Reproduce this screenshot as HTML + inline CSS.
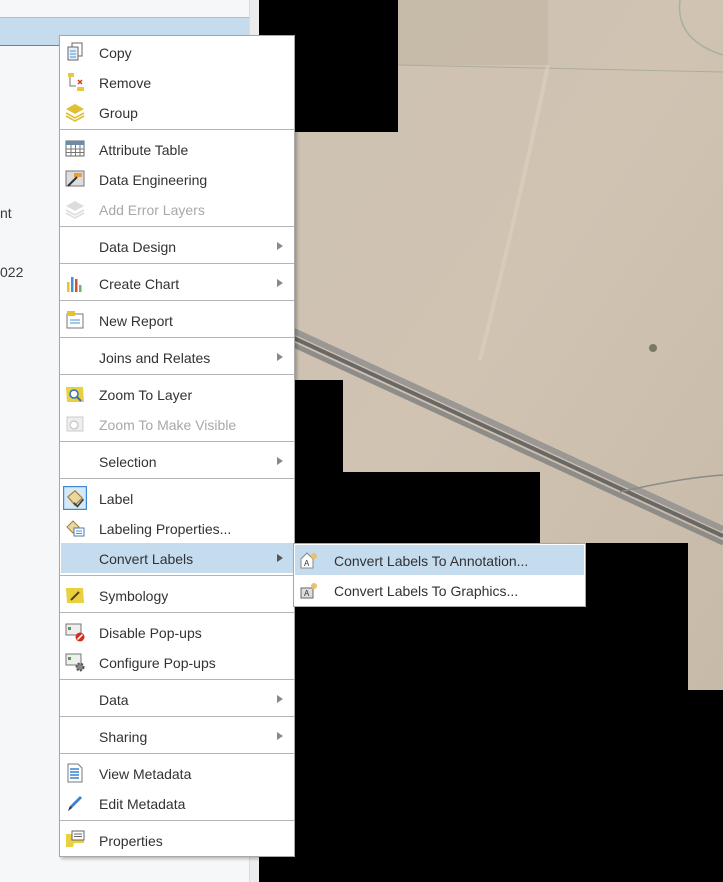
<!DOCTYPE html>
<html><head><meta charset="utf-8"><style>
*{margin:0;padding:0;box-sizing:border-box}
body{width:723px;height:882px;overflow:hidden;background:#000;position:relative;font-family:"Liberation Sans",sans-serif;font-size:14px;color:#323232}
#left{position:absolute;left:0;top:0;width:249px;height:882px;background:#f6f7f8}
#scroll{position:absolute;left:249px;top:0;width:10px;height:882px;background:#ececec;border-left:1px solid #dcdcdc}
#sel{position:absolute;left:0;top:17px;width:249px;height:29px;background:#c5dcef;border-bottom:1px solid #3c8ad4;border-top:1px solid #9cc3e6}
.frag{position:absolute;left:0;color:#3a3a3a;font-size:14px}
#map{position:absolute;left:0;top:0}
.menu{position:absolute;background:#fff;border:1px solid #a8a8a8;box-shadow:2px 2px 3px rgba(0,0,0,.25)}
#m{left:59px;top:35px;width:236px;padding:1px 1px}
.it{height:30px;line-height:32px;position:relative;padding-left:38px;white-space:nowrap}
.it.dis{color:#a8a8a8}
.it.hl{background:#c5dcef}
.it .ic{position:absolute;left:4px;top:5px;width:20px;height:20px}
.it .ar{position:absolute;right:10px;top:11px;width:0;height:0;border-left:6px solid #8a8a8a;border-top:4px solid transparent;border-bottom:4px solid transparent}
.sep{height:7px;position:relative}
.sep:after{content:"";position:absolute;left:-1px;right:-1px;top:2px;height:1px;background:#b4b4b4}
#s{left:293px;top:543px;width:293px;padding:1px}
#s .it{padding-left:39px}
</style></head><body>
<div id="left"></div>
<div id="sel"></div>
<div class="frag" style="top:205px">nt</div>
<div class="frag" style="top:264px">022</div>
<div id="scroll"></div>
<svg id="map" width="723" height="882">
<defs>
<linearGradient id="g" x1="0" y1="0" x2="1" y2="1"><stop offset="0" stop-color="#cdc1b1"/><stop offset=".5" stop-color="#d0c3b2"/><stop offset="1" stop-color="#c8baa8"/></linearGradient>
</defs>
<polygon fill="url(#g)" points="398,0 723,0 723,690 688,690 688,543 540,543 540,472 343,472 343,380 259,380 259,132 398,132"/>
<rect x="398" y="0" width="150" height="65" fill="#c2b4a3" opacity=".6"/>
<path d="M398,65 L723,72" stroke="#8a9a80" stroke-width="1" opacity=".5"/>
<path d="M548,65 Q520,200 480,360" stroke="#dcd1c3" stroke-width="4" fill="none" opacity=".6"/>
<path d="M259,315 L723,529" stroke="#9a9794" stroke-width="6"/>
<path d="M259,322 L723,536" stroke="#6a6866" stroke-width="4"/>
<path d="M259,329 L723,543" stroke="#8e8c89" stroke-width="5"/>
<path d="M620,492 Q680,478 723,475" stroke="#8a8a8a" stroke-width="1.5" fill="none"/>
<circle cx="653" cy="348" r="4" fill="#7a7a60"/>
<path d="M680,0 Q675,40 723,55" stroke="#aab0a0" stroke-width="1.5" fill="none"/>
</svg>

<div class="menu" id="m">
<div class="it"><svg class="ic" viewBox="0 0 20 20"><rect x="7" y="1" width="10" height="13" fill="#fff" stroke="#666"/><rect x="3" y="5" width="10" height="13" fill="#e8f1fa" stroke="#666"/><path d="M5 9h6M5 12h6M5 15h6" stroke="#4a90d0"/></svg>Copy</div>
<div class="it"><svg class="ic" viewBox="0 0 20 20"><rect x="3" y="1" width="6" height="4" fill="#e8c840"/><rect x="12" y="15" width="7" height="4" fill="#e8c840"/><path d="M5 5v9h6" stroke="#777" fill="none"/><path d="M13 8l4 4M17 8l-4 4" stroke="#d04020" stroke-width="1.5"/></svg>Remove</div>
<div class="it"><svg class="ic" viewBox="0 0 20 20"><path d="M1 7l9-5 9 5-9 5z" fill="#e0c030"/><path d="M1 11l9 5 9-5M1 14l9 5 9-5" stroke="#e0c030" stroke-width="1.6" fill="none"/></svg>Group</div>
<div class="sep"></div>
<div class="it"><svg class="ic" viewBox="0 0 20 20"><rect x="1" y="2" width="18" height="15" fill="#fff" stroke="#666"/><rect x="1" y="2" width="18" height="4" fill="#6a8ab0"/><path d="M1 10h18M1 13.5h18M6 6v11M10.5 6v11M15 6v11" stroke="#777"/></svg>Attribute Table</div>
<div class="it"><svg class="ic" viewBox="0 0 20 20"><rect x="1" y="2" width="18" height="15" fill="#ddd" stroke="#777"/><rect x="9" y="4" width="8" height="4" fill="#e8a030"/><path d="M3 17l9-9" stroke="#333" stroke-width="2"/></svg>Data Engineering</div>
<div class="it dis"><svg class="ic" viewBox="0 0 20 20"><path d="M1 7l9-5 9 5-9 5z" fill="#ddd"/><path d="M1 11l9 5 9-5M1 14l9 5 9-5" stroke="#ddd" stroke-width="1.6" fill="none"/></svg>Add Error Layers</div>
<div class="sep"></div>
<div class="it">Data Design<span class="ar"></span></div>
<div class="sep"></div>
<div class="it"><svg class="ic" viewBox="0 0 20 20"><rect x="2" y="9" width="2.5" height="10" fill="#e8c030"/><rect x="6" y="4" width="2.5" height="15" fill="#4a90d0"/><rect x="10" y="6" width="2.5" height="13" fill="#d05030"/><rect x="14" y="12" width="2.5" height="7" fill="#70b070"/></svg>Create Chart<span class="ar"></span></div>
<div class="sep"></div>
<div class="it"><svg class="ic" viewBox="0 0 20 20"><rect x="2" y="4" width="16" height="14" fill="#fff" stroke="#777"/><rect x="2" y="1" width="8" height="5" fill="#e8c030"/><path d="M5 10h10M5 13h10" stroke="#4a90d0"/></svg>New Report</div>
<div class="sep"></div>
<div class="it">Joins and Relates<span class="ar"></span></div>
<div class="sep"></div>
<div class="it"><svg class="ic" viewBox="0 0 20 20"><path d="M1 3h17l1 15H2z" fill="#e8d040"/><circle cx="9" cy="10" r="4" fill="#fff" stroke="#3070c0" stroke-width="1.5"/><path d="M12 13l4 4" stroke="#3070c0" stroke-width="2"/></svg>Zoom To Layer</div>
<div class="it dis"><svg class="ic" viewBox="0 0 20 20"><rect x="2" y="3" width="16" height="14" fill="#eee" stroke="#ccc"/><circle cx="9" cy="11" r="4" fill="#fff" stroke="#ccc" stroke-width="1.5"/></svg>Zoom To Make Visible</div>
<div class="sep"></div>
<div class="it">Selection<span class="ar"></span></div>
<div class="sep"></div>
<div class="it"><svg class="ic" viewBox="0 0 20 20" style="left:2px;top:3px;width:24px;height:24px"><rect x="0.5" y="0.5" width="19" height="19" fill="#d8e8f6" stroke="#3c8ad4"/><path d="M4 9l6-5 6 6-6 6z" fill="#e8d8a0" stroke="#a08040"/><path d="M9 14l3 3 5-6" stroke="#444" stroke-width="1.5" fill="none"/></svg>Label</div>
<div class="it"><svg class="ic" viewBox="0 0 20 20"><path d="M2 9l6-6 6 6-6 6z" fill="#e8d8a0" stroke="#a08040"/><rect x="9" y="10" width="10" height="8" fill="#fff" stroke="#4a7ab0"/><path d="M11 13h6M11 15.5h6" stroke="#4a90d0"/></svg>Labeling Properties...</div>
<div class="it hl">Convert Labels<span class="ar" style="border-left-color:#555"></span></div>
<div class="sep"></div>
<div class="it"><svg class="ic" viewBox="0 0 20 20"><path d="M1 3h17l1 15H2z" fill="#e8d040"/><path d="M6 15l8-8" stroke="#604020" stroke-width="2"/></svg>Symbology</div>
<div class="sep"></div>
<div class="it"><svg class="ic" viewBox="0 0 20 20"><rect x="1" y="2" width="15" height="11" fill="#eee" stroke="#777"/><rect x="3" y="5" width="3" height="3" fill="#50a050"/><circle cx="15" cy="15" r="4.5" fill="#d03020"/><path d="M12.5 17.5l5-5" stroke="#fff" stroke-width="1.5"/></svg>Disable Pop-ups</div>
<div class="it"><svg class="ic" viewBox="0 0 20 20"><rect x="1" y="2" width="15" height="11" fill="#eee" stroke="#777"/><rect x="3" y="5" width="3" height="3" fill="#50a050"/><circle cx="15" cy="15" r="3.5" fill="#888" stroke="#555" stroke-width="2" stroke-dasharray="2 1.5"/></svg>Configure Pop-ups</div>
<div class="sep"></div>
<div class="it">Data<span class="ar"></span></div>
<div class="sep"></div>
<div class="it">Sharing<span class="ar"></span></div>
<div class="sep"></div>
<div class="it"><svg class="ic" viewBox="0 0 20 20"><path d="M3 1h10l4 4v14H3z" fill="#fff" stroke="#777"/><path d="M5 6h9M5 9h9M5 12h9M5 15h9" stroke="#3c80d0" stroke-width="1.5"/></svg>View Metadata</div>
<div class="it"><svg class="ic" viewBox="0 0 20 20"><path d="M3 18l2-5L15 3l2 2L7 15z" fill="#3c80d0"/><path d="M3 18l2-5 2 2z" fill="#333"/></svg>Edit Metadata</div>
<div class="sep"></div>
<div class="it"><svg class="ic" viewBox="0 0 20 20"><path d="M1 4h12v-3h6v12H9l-1 4H1z" fill="#e8d040"/><rect x="7" y="1" width="12" height="9" fill="#fff" stroke="#666"/><path d="M9 4h8M9 6.5h8" stroke="#666"/></svg>Properties</div>
</div>

<div class="menu" id="s">
<div class="it hl"><svg class="ic" viewBox="0 0 20 20"><path d="M2 9l6-6 6 6v9H2z" fill="#fff" stroke="#888"/><text x="5" y="16" font-size="8" fill="#333" font-family="Liberation Sans">A</text><circle cx="15" cy="6" r="3" fill="#e8c070"/></svg>Convert Labels To Annotation...</div>
<div class="it"><svg class="ic" viewBox="0 0 20 20"><rect x="2" y="8" width="12" height="10" fill="#ddd" stroke="#666"/><text x="5" y="16" font-size="8" fill="#333" font-family="Liberation Sans">A</text><circle cx="15" cy="6" r="3" fill="#e8c070"/></svg>Convert Labels To Graphics...</div>
</div>
</body></html>
